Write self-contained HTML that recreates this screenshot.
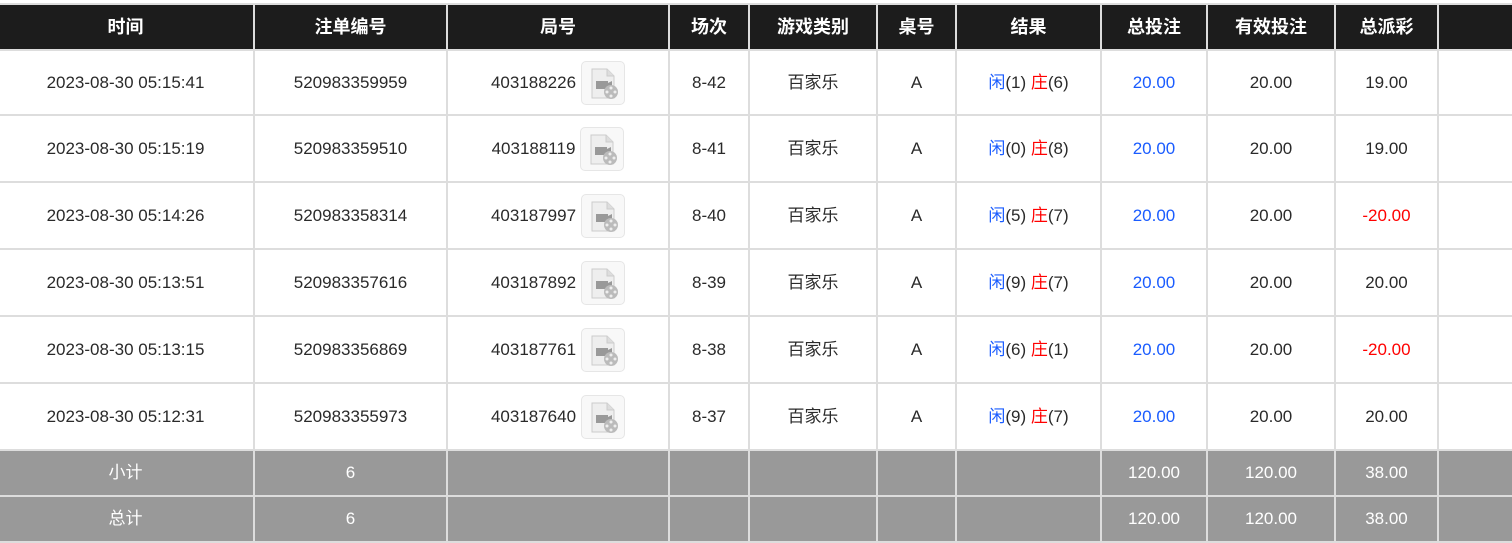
<!DOCTYPE html>
<html><head><meta charset="utf-8"><style>
*{margin:0;padding:0;box-sizing:border-box}
body{width:1512px;height:533px;overflow:hidden;background:#fff;font-family:"Liberation Sans","Noto Sans CJK SC",sans-serif;color:#2a2a2a}
table{position:absolute;top:3px;left:-4px;border-collapse:collapse;table-layout:fixed;width:1518px}
td,th{border:2px solid #ddd;text-align:center;font-size:17px;white-space:nowrap;overflow:hidden;line-height:20px}
th{background:#1c1c1c;color:#fff;font-weight:bold;font-size:18px;height:46px;border-top:2px solid #ddd}
tr.r td{height:67px}
tr.r1 td{height:65px}
tr.s td{background:#999;color:#fff;height:46px}
tr.t td{background:#999;color:#fff;height:46px;vertical-align:top;padding-top:12px}
.b{color:#1a5cff}.red{color:#f00}
.ic{display:inline-block;width:44px;height:44px;vertical-align:middle;margin-left:5px;border:1px solid #e6e6e6;border-radius:5px;background:#f8f8f8}
.jh{display:inline-block;vertical-align:middle}
</style></head><body>
<table>
<colgroup><col style="width:257px"><col style="width:193px"><col style="width:222px"><col style="width:80px"><col style="width:128px"><col style="width:79px"><col style="width:145px"><col style="width:106px"><col style="width:128px"><col style="width:103px"><col style="width:77px"></colgroup>
<tr><th>时间</th><th>注单编号</th><th>局号</th><th>场次</th><th>游戏类别</th><th>桌号</th><th>结果</th><th>总投注</th><th>有效投注</th><th>总派彩</th><th></th></tr>
<tr class="r r1"><td>2023-08-30 05:15:41</td><td>520983359959</td><td><span class="jh">403188226</span><span class="ic"><svg width="42" height="42" viewBox="0 0 42 42"><path d="M10 7h15l7 7v22H10z" fill="#eee" stroke="#ccc"/><path d="M25 7v7h7" fill="#ddd" stroke="#ccc"/><rect x="14" y="19" width="12" height="8" fill="#999"/><path d="M26 21l4-2v8l-4-2z" fill="#999"/><circle cx="29" cy="30" r="7" fill="#bbb"/><circle cx="29" cy="26" r="1.5" fill="#eee"/><circle cx="29" cy="34" r="1.5" fill="#eee"/><circle cx="25" cy="30" r="1.5" fill="#eee"/><circle cx="33" cy="30" r="1.5" fill="#eee"/></svg></span></td><td>8-42</td><td>百家乐</td><td>A</td><td><span class="b">闲</span>(1) <span class="red">庄</span>(6)</td><td class="b">20.00</td><td>20.00</td><td>19.00</td><td></td></tr>
<tr class="r"><td>2023-08-30 05:15:19</td><td>520983359510</td><td><span class="jh">403188119</span><span class="ic"><svg width="42" height="42" viewBox="0 0 42 42"><path d="M10 7h15l7 7v22H10z" fill="#eee" stroke="#ccc"/><path d="M25 7v7h7" fill="#ddd" stroke="#ccc"/><rect x="14" y="19" width="12" height="8" fill="#999"/><path d="M26 21l4-2v8l-4-2z" fill="#999"/><circle cx="29" cy="30" r="7" fill="#bbb"/><circle cx="29" cy="26" r="1.5" fill="#eee"/><circle cx="29" cy="34" r="1.5" fill="#eee"/><circle cx="25" cy="30" r="1.5" fill="#eee"/><circle cx="33" cy="30" r="1.5" fill="#eee"/></svg></span></td><td>8-41</td><td>百家乐</td><td>A</td><td><span class="b">闲</span>(0) <span class="red">庄</span>(8)</td><td class="b">20.00</td><td>20.00</td><td>19.00</td><td></td></tr>
<tr class="r"><td>2023-08-30 05:14:26</td><td>520983358314</td><td><span class="jh">403187997</span><span class="ic"><svg width="42" height="42" viewBox="0 0 42 42"><path d="M10 7h15l7 7v22H10z" fill="#eee" stroke="#ccc"/><path d="M25 7v7h7" fill="#ddd" stroke="#ccc"/><rect x="14" y="19" width="12" height="8" fill="#999"/><path d="M26 21l4-2v8l-4-2z" fill="#999"/><circle cx="29" cy="30" r="7" fill="#bbb"/><circle cx="29" cy="26" r="1.5" fill="#eee"/><circle cx="29" cy="34" r="1.5" fill="#eee"/><circle cx="25" cy="30" r="1.5" fill="#eee"/><circle cx="33" cy="30" r="1.5" fill="#eee"/></svg></span></td><td>8-40</td><td>百家乐</td><td>A</td><td><span class="b">闲</span>(5) <span class="red">庄</span>(7)</td><td class="b">20.00</td><td>20.00</td><td class="red">-20.00</td><td></td></tr>
<tr class="r"><td>2023-08-30 05:13:51</td><td>520983357616</td><td><span class="jh">403187892</span><span class="ic"><svg width="42" height="42" viewBox="0 0 42 42"><path d="M10 7h15l7 7v22H10z" fill="#eee" stroke="#ccc"/><path d="M25 7v7h7" fill="#ddd" stroke="#ccc"/><rect x="14" y="19" width="12" height="8" fill="#999"/><path d="M26 21l4-2v8l-4-2z" fill="#999"/><circle cx="29" cy="30" r="7" fill="#bbb"/><circle cx="29" cy="26" r="1.5" fill="#eee"/><circle cx="29" cy="34" r="1.5" fill="#eee"/><circle cx="25" cy="30" r="1.5" fill="#eee"/><circle cx="33" cy="30" r="1.5" fill="#eee"/></svg></span></td><td>8-39</td><td>百家乐</td><td>A</td><td><span class="b">闲</span>(9) <span class="red">庄</span>(7)</td><td class="b">20.00</td><td>20.00</td><td>20.00</td><td></td></tr>
<tr class="r"><td>2023-08-30 05:13:15</td><td>520983356869</td><td><span class="jh">403187761</span><span class="ic"><svg width="42" height="42" viewBox="0 0 42 42"><path d="M10 7h15l7 7v22H10z" fill="#eee" stroke="#ccc"/><path d="M25 7v7h7" fill="#ddd" stroke="#ccc"/><rect x="14" y="19" width="12" height="8" fill="#999"/><path d="M26 21l4-2v8l-4-2z" fill="#999"/><circle cx="29" cy="30" r="7" fill="#bbb"/><circle cx="29" cy="26" r="1.5" fill="#eee"/><circle cx="29" cy="34" r="1.5" fill="#eee"/><circle cx="25" cy="30" r="1.5" fill="#eee"/><circle cx="33" cy="30" r="1.5" fill="#eee"/></svg></span></td><td>8-38</td><td>百家乐</td><td>A</td><td><span class="b">闲</span>(6) <span class="red">庄</span>(1)</td><td class="b">20.00</td><td>20.00</td><td class="red">-20.00</td><td></td></tr>
<tr class="r"><td>2023-08-30 05:12:31</td><td>520983355973</td><td><span class="jh">403187640</span><span class="ic"><svg width="42" height="42" viewBox="0 0 42 42"><path d="M10 7h15l7 7v22H10z" fill="#eee" stroke="#ccc"/><path d="M25 7v7h7" fill="#ddd" stroke="#ccc"/><rect x="14" y="19" width="12" height="8" fill="#999"/><path d="M26 21l4-2v8l-4-2z" fill="#999"/><circle cx="29" cy="30" r="7" fill="#bbb"/><circle cx="29" cy="26" r="1.5" fill="#eee"/><circle cx="29" cy="34" r="1.5" fill="#eee"/><circle cx="25" cy="30" r="1.5" fill="#eee"/><circle cx="33" cy="30" r="1.5" fill="#eee"/></svg></span></td><td>8-37</td><td>百家乐</td><td>A</td><td><span class="b">闲</span>(9) <span class="red">庄</span>(7)</td><td class="b">20.00</td><td>20.00</td><td>20.00</td><td></td></tr>
<tr class="s"><td>小计</td><td>6</td><td></td><td></td><td></td><td></td><td></td><td>120.00</td><td>120.00</td><td>38.00</td><td></td></tr>
<tr class="t"><td>总计</td><td>6</td><td></td><td></td><td></td><td></td><td></td><td>120.00</td><td>120.00</td><td>38.00</td><td></td></tr>
</table>
</body></html>
